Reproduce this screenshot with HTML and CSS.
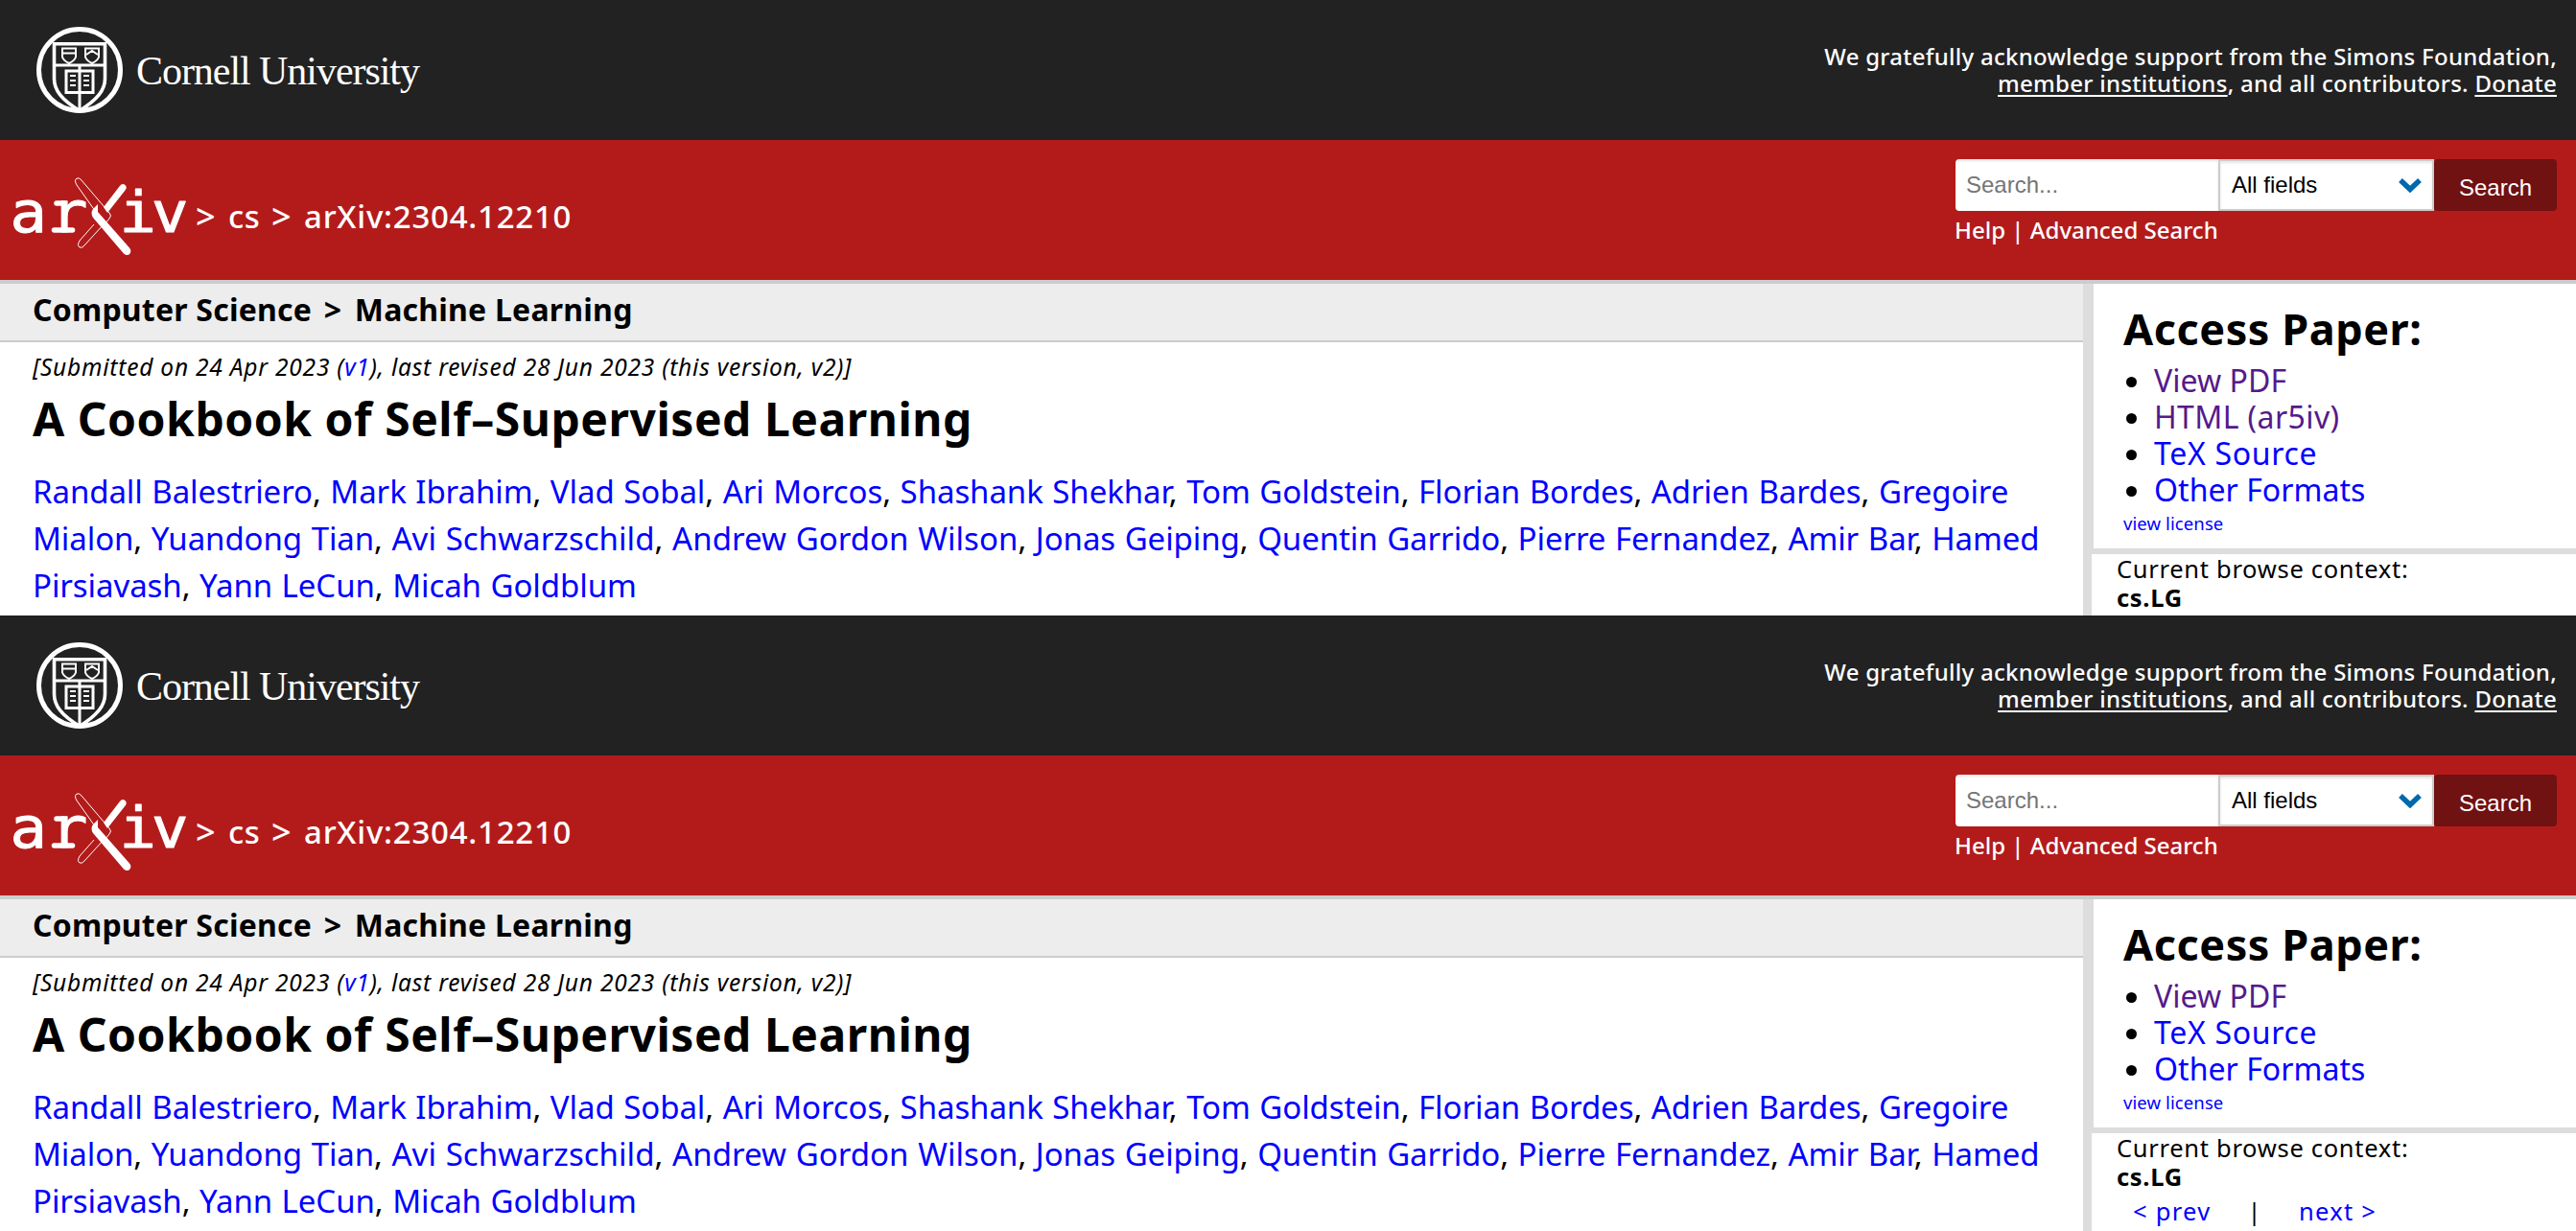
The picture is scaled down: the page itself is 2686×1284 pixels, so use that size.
FILE: index.html
```html
<!DOCTYPE html>
<html lang="en">
<head>
<meta charset="utf-8">
<title>A Cookbook of Self-Supervised Learning</title>
<link rel="stylesheet" href="styles.css">
</head>
<body>
<svg class="defs" width="0" height="0" aria-hidden="true">
  <symbol id="seal" viewBox="0 0 100 100">
    <g fill="none" stroke="#fff">
      <circle cx="53" cy="53" r="42.5" stroke-width="5"/>
      <path d="M26.500 26.300h53V62.500c0 12-8 22-26.500 33.500C34 84.500 26.500 74.500 26.500 62.500z" stroke-width="3.600" transform="translate(0 -0.500)"/>
      <path d="M27 48h53M53 48v46" stroke-width="3"/>
      <path d="M35 30.500h14v9q-1.500 4-7 6.500q-5.500-2.500-7-6.500zM35 35.500h14" stroke-width="2"/>
      <path d="M59 30.500h14v9q-1.500 4-7 6.500q-5.500-2.500-7-6.500zM60 37l6-4l6 4" stroke-width="2"/>
      <path d="M39 54h28v22.500h-28z" stroke-width="3"/>
      <path d="M43 59h6M43 64h6M43 69h6M57 59h6M57 64h6M57 69h6" stroke-width="1.800"/>
    </g>
  </symbol>
  <symbol id="chi" viewBox="0 0 190 90">
    <path d="M49 32h7M46.500 60h19" stroke="#fff" stroke-width="5.500" stroke-linecap="round"/>
    <path d="M98 36l16.500-21.500q3-4 6-1.500q2.500 2.500 0 5.500L102 42z" fill="#fff"/>
    <path d="M92 33l-5 5q-3 4 0 9l32 37.500q4 3 6.500 0q2-3-.5-6L92 41z" fill="#fff"/>
    <path d="M70 13q-3-5 0-7q3-1 5 2l29 34q3 3 0 6l-5 6M70 13l22 31q2 3 6 6M88 54L73 71q-3 5 0 7q3 1 5-2l20-22" fill="none" stroke="#fff" stroke-width="1"/>
  </symbol>
  <symbol id="chevron" viewBox="0 0 24 16">
    <path d="M2 3l10 9.500L22 3" fill="none" stroke="#0068ac" stroke-width="5.500"/>
  </symbol>
</svg>

<section class="page">
  <header class="university">
    <div class="cornell-logo"><svg class="seal"><use href="#seal"/></svg><span>Cornell University</span></div>
    <p class="support">We gratefully acknowledge support from the Simons Foundation,<br><u>member institutions</u>, and all contributors. <u>Donate</u></p>
  </header>
  <div class="banner">
    <div class="breadcrumb">
      <svg class="arxiv-logo" viewBox="0 0 190 90"><g class="arxiv-type" transform="scale(1.100 1)"><text x="0.500" y="62">a</text><text x="39" y="62">r</text><text x="104" y="62">i</text><text x="134.500" y="62">v</text></g><use href="#chi"/></svg>
      <span class="trail"><i>&gt;</i><span>cs</span><i>&gt;</i></span><span class="paper-id">arXiv:2304.12210</span>
    </div>
    <div class="search">
      <div class="search-row"><span class="query">Search...</span><span class="field">All fields<svg class="chevron"><use href="#chevron"/></svg></span><span class="submit">Search</span></div>
      <p class="help">Help | Advanced Search</p>
    </div>
  </div>
  <div class="content">
    <main>
      <h2 class="subject">Computer Science <span class="sep">&gt;</span> Machine Learning</h2>
      <p class="dateline">[Submitted on 24 Apr 2023 (<a>v1</a>), last revised 28 Jun 2023 (this version, v2)]</p>
      <h1 class="title">A Cookbook of Self&#8211;Supervised Learning</h1>
      <p class="authors"><a>Randall Balestriero</a>, <a>Mark Ibrahim</a>, <a>Vlad Sobal</a>, <a>Ari Morcos</a>, <a>Shashank Shekhar</a>, <a>Tom Goldstein</a>, <a>Florian Bordes</a>, <a>Adrien Bardes</a>, <a>Gregoire<br>Mialon</a>, <a>Yuandong Tian</a>, <span class="loose"><a>Avi Schwarzschild</a>, <a>Andrew Gordon Wilson</a></span>, <a>Jonas Geiping</a>, <a>Quentin Garrido</a>, <a>Pierre Fernandez</a>, <a>Amir Bar</a>, <a>Hamed<br>Pirsiavash</a>, <a>Yann LeCun</a>, <a>Micah Goldblum</a></p>
    </main>
    <aside>
      <div class="access">
        <h2>Access Paper:</h2>
        <ul><li><a class="visited">View PDF</a></li><li><a class="visited html">HTML (ar5iv)</a></li><li><a class="source">TeX Source</a></li><li><a>Other Formats</a></li></ul>
        <p class="license"><a>view license</a></p>
      </div>
      <div class="context"><p>Current browse context:</p><p><b>cs.LG</b></p></div>
    </aside>
  </div>
</section>

<section class="page">
  <header class="university">
    <div class="cornell-logo"><svg class="seal"><use href="#seal"/></svg><span>Cornell University</span></div>
    <p class="support">We gratefully acknowledge support from the Simons Foundation,<br><u>member institutions</u>, and all contributors. <u>Donate</u></p>
  </header>
  <div class="banner">
    <div class="breadcrumb">
      <svg class="arxiv-logo" viewBox="0 0 190 90"><g class="arxiv-type" transform="scale(1.100 1)"><text x="0.500" y="62">a</text><text x="39" y="62">r</text><text x="104" y="62">i</text><text x="134.500" y="62">v</text></g><use href="#chi"/></svg>
      <span class="trail"><i>&gt;</i><span>cs</span><i>&gt;</i></span><span class="paper-id">arXiv:2304.12210</span>
    </div>
    <div class="search">
      <div class="search-row"><span class="query">Search...</span><span class="field">All fields<svg class="chevron"><use href="#chevron"/></svg></span><span class="submit">Search</span></div>
      <p class="help">Help | Advanced Search</p>
    </div>
  </div>
  <div class="content">
    <main>
      <h2 class="subject">Computer Science <span class="sep">&gt;</span> Machine Learning</h2>
      <p class="dateline">[Submitted on 24 Apr 2023 (<a>v1</a>), last revised 28 Jun 2023 (this version, v2)]</p>
      <h1 class="title">A Cookbook of Self&#8211;Supervised Learning</h1>
      <p class="authors"><a>Randall Balestriero</a>, <a>Mark Ibrahim</a>, <a>Vlad Sobal</a>, <a>Ari Morcos</a>, <a>Shashank Shekhar</a>, <a>Tom Goldstein</a>, <a>Florian Bordes</a>, <a>Adrien Bardes</a>, <a>Gregoire<br>Mialon</a>, <a>Yuandong Tian</a>, <span class="loose"><a>Avi Schwarzschild</a>, <a>Andrew Gordon Wilson</a></span>, <a>Jonas Geiping</a>, <a>Quentin Garrido</a>, <a>Pierre Fernandez</a>, <a>Amir Bar</a>, <a>Hamed<br>Pirsiavash</a>, <a>Yann LeCun</a>, <a>Micah Goldblum</a></p>
    </main>
    <aside>
      <div class="access">
        <h2>Access Paper:</h2>
        <ul><li><a class="visited">View PDF</a></li><li><a class="source">TeX Source</a></li><li><a>Other Formats</a></li></ul>
        <p class="license"><a>view license</a></p>
      </div>
      <div class="context"><p>Current browse context:</p><p><b>cs.LG</b></p><p class="pager"><a>&lt; prev</a><span>|</span><a>next &gt;</a></p></div>
    </aside>
  </div>
</section>
</body>
</html>
```
FILE: styles.css
```css
* { box-sizing: border-box; }
body { margin: 0; background: #fff; color: #000; font-family: "Noto Sans", sans-serif; }
p, h1, h2, ul { margin: 0; padding: 0; }
a { color: #00f; }
a.visited { color: #551a8b; }
.defs { display: block; }
.page { height: 642px; overflow: hidden; }

.university { display: flex; justify-content: space-between; height: 146px; background: #222; }
.cornell-logo { display: flex; padding: 20px 0 0 30px; color: #fff; font-family: "Liberation Serif", serif; font-size: 42px; line-height: 50px; letter-spacing: -1.05px; }
.cornell-logo span { margin: 29px 0 0 12px; }
.seal { width: 100px; height: 100px; }
.support { padding: 45px 20px 0 0; color: #fff; font-size: 24px; font-weight: 500; line-height: 28px; letter-spacing: .27px; text-align: right; }
.support u { text-underline-offset: 3px; text-decoration-thickness: 2px; text-decoration-skip-ink: none; }

.banner { display: flex; justify-content: space-between; height: 150px; background: #b31b1b; border-bottom: 4px solid #ccc; color: #fff; }
.breadcrumb { display: flex; padding-left: 10px; font-size: 33px; font-weight: 500; line-height: 40px; }
.arxiv-logo { width: 190px; height: 90px; margin-top: 34px; }
.arxiv-type { font-family: "DejaVu Sans Mono", monospace; font-size: 58px; font-weight: 400; fill: #fff; stroke: #fff; stroke-width: 1px; stroke-linejoin: round; }
.trail { display: flex; width: 117px; margin-top: 60px; padding-left: 4px; }
.trail i { width: 34px; font-style: normal; font-size: 36px; }
.trail span { width: 45px; letter-spacing: .6px; }
.paper-id { margin-top: 60px; letter-spacing: .75px; }
.search { width: 627px; margin: 20px 20px 0 0; }
.search-row { display: flex; height: 54px; font-family: "Liberation Sans", sans-serif; font-size: 24px; line-height: 54px; }
.query { width: 274px; padding-left: 11px; background: #fff; color: #757575; border-radius: 4px 0 0 4px; box-shadow: inset 0 2px 3px rgba(0,0,0,.1); }
.field { display: flex; justify-content: space-between; align-items: center; width: 225px; padding: 0 11px 0 12px; background: #fff; color: #000; border: 2px solid #ccc; box-shadow: inset 0 2px 3px rgba(0,0,0,.1); }
.chevron { width: 24px; height: 16px; }
.submit { width: 128px; padding-top: 3px; background: #701112; text-align: center; border-radius: 4px; }
.help { margin: 6px 0 0 -1px; font-size: 24px; font-weight: 500; line-height: 28px; }

.content { display: flex; height: 346px; }
main { width: 2172px; }
.subject { height: 61px; padding: 0 0 6px 34px; background: #ededed; border-bottom: 2px solid #ccc; font-size: 32px; line-height: 53px; letter-spacing: .22px; }
.sep { margin: 0 5px 0 4px; }
.dateline { padding: 11px 0 0 34px; font-size: 24.5px; font-style: italic; line-height: 30px; letter-spacing: .79px; }
.title { margin: 9px 0 0 34px; font-size: 48px; line-height: 60px; letter-spacing: .52px; }
.authors { margin: 21px 0 0 34px; font-size: 33px; line-height: 49px; letter-spacing: -.08px; word-spacing: 1.1px; white-space: nowrap; }
.loose { letter-spacing: .04px; }

aside { width: 514px; border-left: 9px solid #ddd; }
.access { padding: 22px 0 14px 31px; border-left: 2px solid #ddd; border-bottom: 6px solid #ddd; }
.access h2 { font-size: 45px; line-height: 50px; letter-spacing: .55px; }
.access ul { margin: 10px 0 0 32px; font-size: 32px; line-height: 38px; }
.access li { letter-spacing: .05px; }
.access .html { letter-spacing: .4px; }
.access .source { letter-spacing: .7px; }
.license { margin-top: 4px; font-size: 18.5px; line-height: 24px; letter-spacing: .1px; }
.context { padding-left: 26px; font-size: 25.5px; line-height: 30px; letter-spacing: .7px; }
.pager { display: flex; gap: 38px; margin: 6px 0 0 17px; letter-spacing: 1.3px; }
```
